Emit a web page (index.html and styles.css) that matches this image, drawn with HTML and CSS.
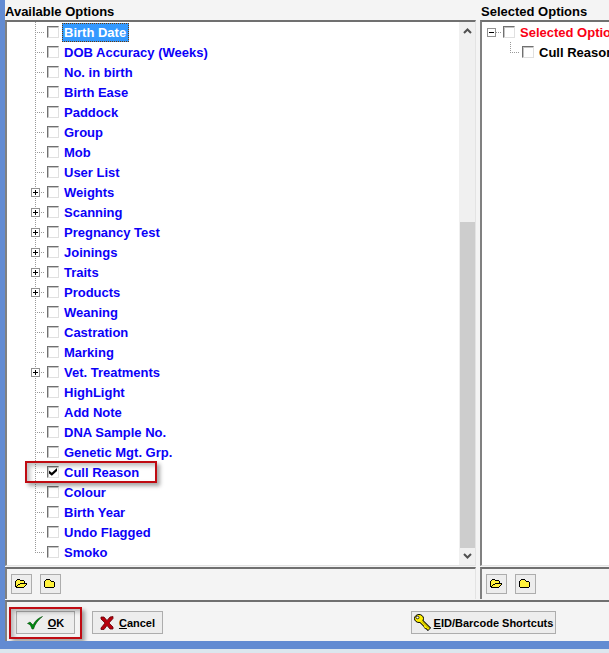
FILE: index.html
```html
<!DOCTYPE html>
<html lang="en">
<head>
<meta charset="utf-8">
<title>Options</title>
<link rel="stylesheet" href="styles.css">
</head>
<body>
<svg class="defs" aria-hidden="true">
  <defs>
    <symbol id="open" viewBox="0 0 13 10">
      <path fill="#fff23c" d="M1 2h1V1h3v1h4v2h3v1h-1v1h-1v1H9v1H1z"/>
      <path fill="#000" d="M2 0h3v1H2zM1 1h1v1H1zM5 1h4v1H5zM0 2h1v6H0zM9 2h1v2H9zM5 4h7v1H5zM3 5h2v1H3zM2 6h1v1H2zM1 7h1v1H1zM11 5h1v1h-1zM10 6h1v1h-1zM9 7h1v1H9zM1 8h8v1H1z"/>
    </symbol>
    <symbol id="closed" viewBox="0 0 13 10">
      <path fill="#fff23c" d="M1 2h1V1h4v1h4v6H1z"/>
      <path fill="#000" d="M2 0h4v1H2zM1 1h1v1H1zM6 1h1v1H6zM0 2h1v6H0zM7 2h3v1H7zM10 3h1v5h-1zM1 8h9v1H1z"/>
    </symbol>
  </defs>
</svg>
<main class="window">
  <div class="panes">
    <section class="pane">
      <h2>Available Options</h2>
      <div class="well list">
        <ul class="tree">
          <li><input type="checkbox" id="a1"><label class="current" for="a1">Birth Date</label></li>
          <li><input type="checkbox" id="a2"><label for="a2">DOB Accuracy (Weeks)</label></li>
          <li><input type="checkbox" id="a3"><label for="a3">No. in birth</label></li>
          <li><input type="checkbox" id="a4"><label for="a4">Birth Ease</label></li>
          <li><input type="checkbox" id="a5"><label for="a5">Paddock</label></li>
          <li><input type="checkbox" id="a6"><label for="a6">Group</label></li>
          <li><input type="checkbox" id="a7"><label for="a7">Mob</label></li>
          <li><input type="checkbox" id="a8"><label for="a8">User List</label></li>
          <li><button class="toggle plus" aria-label="Expand Weights"></button><input type="checkbox" id="a9"><label for="a9">Weights</label></li>
          <li><button class="toggle plus" aria-label="Expand Scanning"></button><input type="checkbox" id="a10"><label for="a10">Scanning</label></li>
          <li><button class="toggle plus" aria-label="Expand Pregnancy Test"></button><input type="checkbox" id="a11"><label for="a11">Pregnancy Test</label></li>
          <li><button class="toggle plus" aria-label="Expand Joinings"></button><input type="checkbox" id="a12"><label for="a12">Joinings</label></li>
          <li><button class="toggle plus" aria-label="Expand Traits"></button><input type="checkbox" id="a13"><label for="a13">Traits</label></li>
          <li><button class="toggle plus" aria-label="Expand Products"></button><input type="checkbox" id="a14"><label for="a14">Products</label></li>
          <li><input type="checkbox" id="a15"><label for="a15">Weaning</label></li>
          <li><input type="checkbox" id="a16"><label for="a16">Castration</label></li>
          <li><input type="checkbox" id="a17"><label for="a17">Marking</label></li>
          <li><button class="toggle plus" aria-label="Expand Vet. Treatments"></button><input type="checkbox" id="a18"><label for="a18">Vet. Treatments</label></li>
          <li><input type="checkbox" id="a19"><label for="a19">HighLight</label></li>
          <li><input type="checkbox" id="a20"><label for="a20">Add Note</label></li>
          <li><input type="checkbox" id="a21"><label for="a21">DNA Sample No.</label></li>
          <li><input type="checkbox" id="a22"><label for="a22">Genetic Mgt. Grp.</label></li>
          <li><input type="checkbox" id="a23" checked><label for="a23">Cull Reason</label><span class="mark mark-row"></span></li>
          <li><input type="checkbox" id="a24"><label for="a24">Colour</label></li>
          <li><input type="checkbox" id="a25"><label for="a25">Birth Year</label></li>
          <li><input type="checkbox" id="a26"><label for="a26">Undo Flagged</label></li>
          <li><input type="checkbox" id="a27"><label for="a27">Smoko</label></li>
        </ul>
        <div class="scrollbar">
          <svg class="arrow" viewBox="0 0 9 6"><path d="M1 5l3.500-3.500L8 5"/></svg>
          <div class="track"><div class="thumb"></div></div>
          <svg class="arrow" viewBox="0 0 9 6"><path d="M1 1l3.500 3.500L8 1"/></svg>
        </div>
      </div>
      <div class="well tools">
        <button class="btn tool" aria-label="Expand all"><svg><use href="#open"/></svg></button>
        <button class="btn tool" aria-label="Collapse all"><svg><use href="#closed"/></svg></button>
      </div>
    </section>
    <section class="pane">
      <h2>Selected Options</h2>
      <div class="well list">
        <ul class="tree selected">
          <li class="root"><button class="toggle" aria-label="Collapse Selected Options"></button><input type="checkbox" id="s1"><label for="s1">Selected Options</label></li>
          <li class="leaf"><input type="checkbox" id="s2"><label for="s2">Cull Reason</label></li>
        </ul>
      </div>
      <div class="well tools">
        <button class="btn tool" aria-label="Expand selected"><svg><use href="#open"/></svg></button>
        <button class="btn tool" aria-label="Collapse selected"><svg><use href="#closed"/></svg></button>
      </div>
    </section>
  </div>
  <footer class="well actions">
    <div class="ok-wrap">
      <button class="btn ok"><svg width="16" height="14" viewBox="0 0 16 14"><path fill="#008a10" stroke="#064d0c" stroke-width=".6" d="M.5 7.500l2.500-1.500 3 3C8 5 11 2 15.500.5 11 4 8 8 6.500 13H5C4 10 3 8 .5 7.500z"/></svg><span><u>O</u>K</span></button>
      <span class="mark mark-ok"></span>
    </div>
    <button class="btn cancel"><svg width="14" height="14" viewBox="0 0 14 14"><path fill="#b8000c" stroke="#650008" stroke-width=".8" d="M1 1h3l3 3.500L10 1l3-.5v2L9 7l4 4v2h-3L7 9.500l-3 4H1V12l4-5-4-4z"/></svg><span><u>C</u>ancel</span></button>
    <button class="btn shortcuts"><svg width="17" height="17" viewBox="0 0 17 17"><path fill="none" stroke="#000" stroke-width="4.500" d="M7 7l8.500 8.500M11.500 12.500l-1.500 1"/><ellipse cx="5" cy="4.500" rx="4.500" ry="4" fill="#fff000" stroke="#000"/><path fill="none" stroke="#fff000" stroke-width="2.500" d="M6 6l9 9M12 12l-1.500 1.500"/><ellipse cx="3.500" cy="3.500" rx="1.500" ry="1.300" fill="#fff" stroke="#000" stroke-width=".8"/><path stroke="#8c7d00" stroke-width=".8" d="M8 7.500l7 7"/></svg><span><u>E</u>ID/Barcode Shortcuts</span></button>
  </footer>
</main>
</body>
</html>
```
FILE: styles.css
```css
* {
  box-sizing: border-box;
}

body {
  margin: 0;
  background: #dce6ee;
  color: #000;
  font: bold 13px/20px "Liberation Sans", Arial, sans-serif;
}

.defs {
  position: absolute;
  width: 0;
  height: 0;
}

.window {
  display: flex;
  flex-direction: column;
  min-height: calc(100vh - 4px);
  border-left: 5px solid #628bd2;
  border-bottom: 8px solid #628bd2;
  background: #f4f4f4;
  overflow: hidden;
}

.panes {
  flex: 1;
  display: grid;
  grid-template-columns: minmax(0, 157fr) minmax(0, 43fr);
  gap: 4px;
}

.pane {
  display: flex;
  flex-direction: column;
}

h2 {
  margin: 0;
  padding-top: 4px;
  font-size: 13px;
  line-height: 16px;
  white-space: nowrap;
}

.pane + .pane h2 {
  padding-left: 1px;
}

.well {
  border-top: 2px solid #707070;
  border-left: 2px solid #808080;
}

.list {
  flex: 1;
  display: flex;
  background: #fff;
  overflow: hidden;
  border-bottom: 1px solid #e3e3e3;
}

.pane:first-child .well {
  border-right: 1px solid #e3e3e3;
}

.tree {
  flex: 1;
  min-width: 0;
  margin: 0;
  padding: 0 0 3px;
  list-style: none;
  color: #0b00f8;
}

.tree li {
  position: relative;
  display: flex;
  align-items: center;
  height: 20px;
  padding-left: 40px;
  white-space: nowrap;
}

/* Dotted connectors: trunk and branch */
.tree li::before {
  content: "";
  position: absolute;
  top: 0;
  left: 28px;
  width: 1px;
  height: 20px;
  background: repeating-linear-gradient(#999 0 1px, #fff 1px 2px);
}

.tree li::after {
  content: "";
  position: absolute;
  top: 10px;
  left: 28px;
  width: 9px;
  height: 1px;
  background: repeating-linear-gradient(90deg, #999 0 1px, #fff 1px 2px);
}

.tree li:last-child::before {
  height: 10px;
}

input {
  appearance: none;
  flex: none;
  position: relative;
  width: 12px;
  height: 12px;
  margin: 0 3px 0 0;
  border: 1px solid #e0e0e0;
  border-top-color: #707070;
  border-left-color: #707070;
  background: #fff;
  box-shadow: inset 1px 1px #c4c4c4;
}

input:checked::before {
  content: "";
  position: absolute;
  inset: 1px;
  background: #000;
  clip-path: polygon(0 30%, 35% 58%, 100% 0, 100% 38%, 35% 98%, 0 70%);
}

label {
  height: 19px;
  padding: 0 2px;
  line-height: 20px;
}

.current {
  border: 1px dotted #6a3a08;
  padding: 0 2px 0 1px;
  line-height: 18px;
  background: #3399ff;
  color: #fff;
}

.toggle {
  position: absolute;
  z-index: 1;
  top: 6px;
  left: 24px;
  width: 9px;
  height: 9px;
  padding: 0;
  border: 1px solid #919191;
  background: linear-gradient(#000, #000) center / 5px 1px no-repeat, #fff;
}

.plus {
  background: linear-gradient(#000, #000) center / 5px 1px no-repeat, linear-gradient(#000, #000) center / 1px 5px no-repeat, #fff;
}

.selected .root {
  padding-left: 21px;
  color: #fa0014;
}

.selected .root::before {
  display: none;
}

.selected .root::after {
  left: 14px;
  width: 5px;
}

.selected .toggle {
  left: 5px;
}

.selected .leaf {
  color: #000;
}

.scrollbar {
  display: flex;
  flex-direction: column;
  align-items: center;
  justify-content: space-between;
  width: 16px;
  padding: 6px 0;
  background: #f0f0f0;
}

.arrow {
  width: 9px;
  height: 6px;
  fill: none;
  stroke: #505050;
  stroke-width: 2px;
}

.track {
  display: flex;
  flex-direction: column;
  justify-content: flex-end;
  flex: 1;
  width: 15px;
  margin: 5px 0;
}

.thumb {
  height: 64%;
  background: #cdcdcd;
}

.tools {
  display: flex;
  gap: 8px;
  margin-top: 1px;
  padding: 5px 4px;
  height: 32px;
}

.btn {
  display: flex;
  align-items: center;
  justify-content: center;
  padding: 0;
  border: 1px solid #adadad;
  background: #ededed;
  color: #000;
  font: bold 11px/16px "Liberation Sans", Arial, sans-serif;
  white-space: nowrap;
}

.btn svg {
  flex: none;
}

.tool {
  width: 21px;
  height: 20px;
}

.tool svg {
  width: 13px;
  height: 10px;
  shape-rendering: crispEdges;
}

.actions {
  display: flex;
  align-items: flex-start;
  height: 41px;
  margin-top: 1px;
  padding: 9px 53px 0 9px;
}

.actions .btn {
  height: 23px;
  gap: 5px;
}

.ok-wrap {
  position: relative;
  margin-right: 17px;
}

.ok {
  width: 59px;
}

.cancel {
  width: 71px;
}

.shortcuts {
  width: 145px;
  margin-left: auto;
}

.actions .shortcuts {
  gap: 3px;
}

/* Highlight frames over the chosen option and button */
.mark {
  position: absolute;
  z-index: 2;
  border: 2px solid #c00b12;
  box-shadow: 3px 3px 4px rgba(0, 0, 0, .35), inset 3px 3px 4px rgba(0, 0, 0, .25);
  pointer-events: none;
}

.mark-row {
  top: -1px;
  left: 18px;
  width: 132px;
  height: 22px;
}

.mark-ok {
  top: -4px;
  left: -7px;
  width: 73px;
  height: 32px;
}
```
